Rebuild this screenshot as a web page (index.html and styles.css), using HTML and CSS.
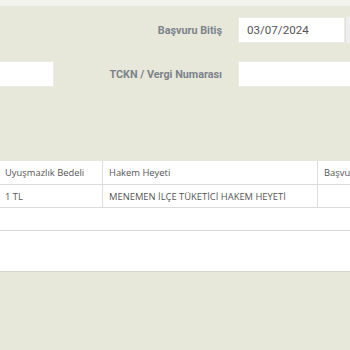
FILE: index.html
```html
<!DOCTYPE html>
<html lang="tr">
<head>
<meta charset="utf-8">
<link rel="stylesheet" href="styles.css">
</head>
<body>
<div class="topbar"></div>
<div class="form">
  <div class="cell"></div>
  <label class="label">Başvuru Bitiş</label>
  <div class="date-wrap">
    <div class="input date">03/07/2024</div>
    <div class="addon"></div>
  </div>
  <div class="input left"></div>
  <label class="label">TCKN / Vergi Numarası</label>
  <div class="input wide"></div>
</div>
<div class="grid">
  <div class="row head">
    <div class="c c1">Uyuşmazlık Bedeli</div>
    <div class="c c2">Hakem Heyeti</div>
    <div class="c c3">Başvuru Tarihi</div>
  </div>
  <div class="row">
    <div class="c c1">1 TL</div>
    <div class="c c2">MENEMEN İLÇE TÜKETİCİ HAKEM HEYETİ</div>
    <div class="c c3"></div>
  </div>
  <div class="empty"></div>
  <div class="pager"></div>
</div>
</body>
</html>
```

FILE: styles.css
```css
html, body {
  margin: 0;
  padding: 0;
  background: #e7e7da;
  overflow: hidden;
  width: 350px;
  height: 350px;
}
.topbar {
  height: 6px;
  background: #f3f3ee;
}
.form {
  display: grid;
  grid-template-columns: 54px 152px 112px;
  column-gap: 16px;
  row-gap: 18px;
  padding-top: 11px;
  height: 144px;
  align-content: start;
}
.label {
  font-family: Roboto, "Liberation Sans", sans-serif;
  font-weight: bold;
  font-size: 10.8px;
  color: #7c838b;
  text-align: right;
  align-self: center;
  white-space: nowrap;
}
.input {
  height: 26px;
  background: #fff;
  box-sizing: border-box;
  border: 1px solid #ecece4;
}
.left {
  margin-left: -2px;
}
.date-wrap {
  display: flex;
}
.date {
  width: 107px;
  flex: none;
  font-family: Roboto, "Liberation Sans", sans-serif;
  font-size: 11.6px;
  color: #555;
  line-height: 24px;
  padding-left: 8px;
}
.addon {
  flex: none;
  width: 10px;
  height: 26px;
  background: #eeeeee;
  border-left: 1px solid #dedede;
}
.wide {
  width: 120px;
}
.grid {
  background: #fff;
  border-bottom: 1px solid #d4d4c6;
}
.row {
  display: flex;
  border-bottom: 1px solid #dcdcdc;
  height: 22px;
}
.head {
  height: 23px;
}
.c {
  flex: none;
  font-family: "Open Sans", sans-serif;
  font-size: 9.4px;
  color: #555;
  display: flex;
  align-items: center;
  box-sizing: border-box;
  padding-left: 6px;
  white-space: nowrap;
  overflow: hidden;
}
.c1 { width: 102px; padding-left: 5px; }
.c2 { width: 215px; border-left: 1px solid #dcdcdc; }
.c3 { width: 120px; border-left: 1px solid #dcdcdc; }
.empty {
  height: 22px;
  border-bottom: 1px solid #d6d6d6;
}
.pager {
  height: 40px;
}
```
